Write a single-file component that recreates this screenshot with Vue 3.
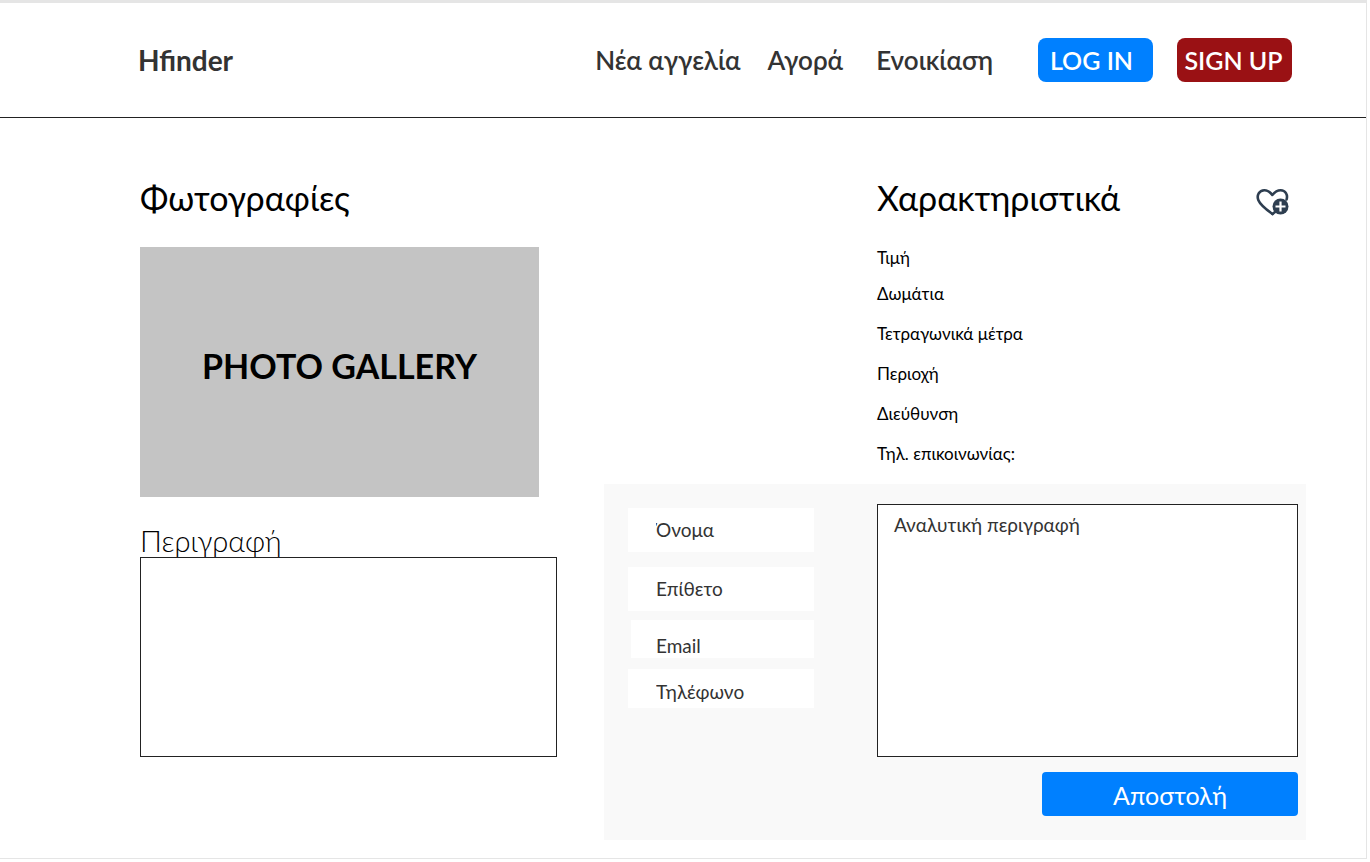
<script setup>
const links = ['Νέα αγγελία', 'Αγορά', 'Ενοικίαση']
const features = [
  'Τιμή',
  'Δωμάτια',
  'Τετραγωνικά μέτρα',
  'Περιοχή',
  'Διεύθυνση',
  'Τηλ. επικοινωνίας:',
]
const fields = [
  { id: 'name', label: 'Όνομα', type: 'text' },
  { id: 'surname', label: 'Επίθετο', type: 'text' },
  { id: 'email', label: 'Email', type: 'email' },
  { id: 'phone', label: 'Τηλέφωνο', type: 'tel' },
]
</script>

<template>
  <div class="page">
    <header class="header">
      <a class="brand" href="#">Hfinder</a>
      <nav class="nav">
        <a v-for="link in links" :key="link" href="#">{{ link }}</a>
      </nav>
      <div class="account">
        <button type="button" class="login">LOG IN</button>
        <button type="button" class="signup">SIGN UP</button>
      </div>
    </header>

    <main class="main">
      <section class="left">
        <h2>Φωτογραφίες</h2>
        <div class="gallery">PHOTO GALLERY</div>
        <label class="description-label" for="description">Περιγραφή</label>
        <textarea id="description" class="description"></textarea>
      </section>

      <section class="right">
        <div class="features">
          <div class="features-head">
            <h2>Χαρακτηριστικά</h2>
            <button type="button" class="favorite" aria-label="Προσθήκη στα αγαπημένα">
              <svg viewBox="0 0 36 30" width="36" height="30">
                <path
                  d="M17.5 27 C14 24.5 5.2 17.5 3.4 13.2 C1.4 8.4 4.2 3.2 9.3 3.2 C13 3.2 15.5 5.5 17.3 8 C19.3 5.5 22 3.2 25.7 3.2 C30.5 3.2 33 7.8 31.6 12.5"
                  fill="none" stroke="#2e3e50" stroke-width="2.6" stroke-linecap="round" stroke-linejoin="round"
                />
                <path d="M17.5 27 L20 25" stroke="#2e3e50" stroke-width="2.6" stroke-linecap="round" />
                <circle cx="25.5" cy="19.5" r="8" fill="#2e3e50" />
                <path d="M25.5 14.5 V24.5 M20.5 19.5 H30.5" stroke="#fff" stroke-width="2.2" />
              </svg>
            </button>
          </div>
          <ul>
            <li v-for="feature in features" :key="feature">{{ feature }}</li>
          </ul>
        </div>

        <form class="contact" @submit.prevent>
          <div class="fields">
            <input
              v-for="field in fields" :key="field.id"
              :class="field.id" :type="field.type"
              :placeholder="field.label" :aria-label="field.label"
            />
          </div>
          <div class="message">
            <textarea placeholder="Αναλυτική περιγραφή" aria-label="Αναλυτική περιγραφή"></textarea>
            <button type="submit">Αποστολή</button>
          </div>
        </form>
      </section>
    </main>
  </div>
</template>

<style>
body {
  margin: 0;
  background: #fff;
}
</style>

<style scoped>
* {
  box-sizing: border-box;
}

.page {
  min-height: calc(100vh - 3px);
  margin-right: 3px;
  border: solid #e5e5e5;
  border-width: 3px 1px 1px 0;
  font-family: Lato, "Liberation Sans", sans-serif;
  color: #000;
}

button,
input,
textarea {
  margin: 0;
  border: 0;
  font-family: inherit;
}

a {
  color: inherit;
  text-decoration: none;
}

.header {
  display: flex;
  align-items: center;
  height: 115px;
  padding: 0 74px 0 138px;
  border-bottom: 1px solid #222;
  color: #333;
  font-weight: 600;
}

.brand {
  font-size: 28px;
  font-weight: 700;
}

.nav {
  display: flex;
  gap: 27px;
  margin-left: auto;
  font-size: 26px;
}

.nav a:last-child {
  margin-left: 6px;
}

.account {
  display: flex;
  gap: 24px;
  margin-left: 45px;
}

.account button {
  width: 115px;
  height: 44px;
  padding: 0 2px 0 0;
  border-radius: 8px;
  color: #fff;
  font-size: 25px;
  font-weight: 600;
}

.account .login {
  padding-right: 8px;
  background: #0080ff;
}

.account .signup {
  background: #9a1114;
}

.main {
  display: grid;
  grid-template-columns: minmax(0, 417fr) minmax(0, 702fr);
  gap: 47px;
  padding: 60px 60px 18px 140px;
}

h2 {
  margin: 0;
  font-size: 34px;
  font-weight: 400;
  line-height: 40px;
}

.gallery {
  display: flex;
  align-items: center;
  justify-content: center;
  width: calc(100% - 18px);
  height: 250px;
  margin-top: 29px;
  padding-bottom: 14px;
  background: #c4c4c4;
  font-size: 34px;
  font-weight: 700;
}

.description-label {
  display: block;
  margin-top: 28px;
  font-size: 29px;
  font-weight: 300;
  line-height: 32px;
}

.description {
  display: block;
  width: 100%;
  height: 200px;
  padding: 12px 16px;
  border: 1px solid #222;
  background: #fff;
  resize: none;
}

.features {
  padding: 0 15px 0 273px;
}

.features-head {
  display: flex;
  align-items: center;
  justify-content: space-between;
}

.favorite {
  display: flex;
  padding: 8px 0 0;
  background: none;
}

ul {
  display: grid;
  gap: 20px;
  margin: 30px 0 0;
  padding: 0;
  list-style: none;
  font-size: 17px;
  line-height: 20px;
}

li:first-child {
  margin-bottom: -4px;
}

.contact {
  display: grid;
  grid-template-columns: 186px minmax(0, 1fr);
  gap: 63px;
  margin-top: 20px;
  padding: 20px 8px 24px 24px;
  background: #f9f9f9;
}

.fields {
  display: flex;
  flex-direction: column;
  align-items: flex-end;
  padding-top: 4px;
}

.fields input {
  width: 100%;
  height: 44px;
  padding: 0 28px 2px;
  background: #fff;
  font-size: 19px;
}

.fields .surname {
  margin-top: 15px;
}

.fields .email {
  width: 183px;
  height: 38px;
  margin-top: 9px;
  padding: 12px 25px 0;
}

.fields .phone {
  height: 39px;
  margin-top: 11px;
  padding: 6px 28px 0;
}

::placeholder {
  color: #333;
  opacity: 1;
}

.message textarea {
  display: block;
  width: 100%;
  height: 253px;
  padding: 8px 16px;
  border: 1px solid #222;
  background: #fff;
  font-size: 19px;
  line-height: 24px;
  resize: none;
}

.message button {
  display: block;
  width: 256px;
  height: 44px;
  margin: 15px 0 0 auto;
  padding: 2px 0 0;
  border-radius: 4px;
  background: #0080ff;
  color: #fff;
  font-size: 25px;
}
</style>
